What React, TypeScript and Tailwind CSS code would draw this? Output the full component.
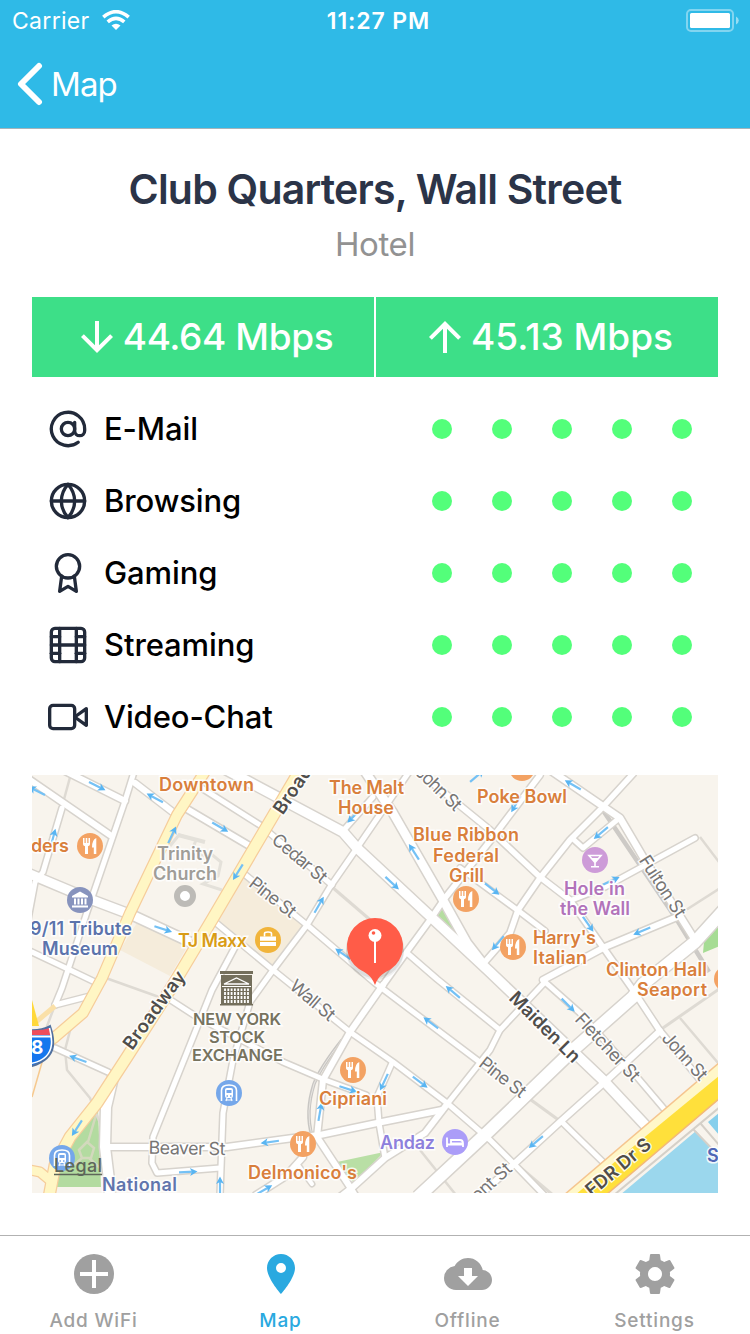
import { ReactNode } from 'react';
import { FiAtSign, FiGlobe, FiAward, FiFilm, FiVideo } from 'react-icons/fi';
import { MdArrowDownward, MdArrowUpward, MdPlace, MdCloudDownload } from 'react-icons/md';

const ratings = [
  { label: 'E-Mail', icon: FiAtSign, score: 5 },
  { label: 'Browsing', icon: FiGlobe, score: 5 },
  { label: 'Gaming', icon: FiAward, score: 5 },
  { label: 'Streaming', icon: FiFilm, score: 5 },
  { label: 'Video-Chat', icon: FiVideo, score: 5 },
];

// Map geometry, [path, width]
const thinRoads: [string, number][] = [
  ['M72 770L63 803', 2.5],
  ['M103 977L173 1002', 2.5],
  ['M332 887L375 924', 3],
  ['M700 837L722 866', 2.5],
  ['M675 917L722 887', 2.5],
  ['M660 1030L722 987', 3],
  ['M680 1018L718 1063', 2.5],
  ['M515 1163L553 1195', 3],
  ['M420 1150L456 1195', 2.5],
  ['M527 1097L560 1121', 3],
  ['M600 806L677 920L709 972', 4.5],
  ['M72 1023L65 1050L67 1070L90 1098L100 1123', 2.5],
  ['M342 1040Q320 1068 314 1084Q305 1112 312 1136', 3.5],
  ['M65 980L55 1005L38 1050', 2.5],
];

const roads: [string, number][] = [
  ['M20 773L62 802L110 835', 6],
  ['M63 770L125 801', 6],
  ['M134 772L125 801L87 912L62 988L55 1005', 5],
  ['M135 783L174 813', 6],
  ['M187 809L248 845', 6],
  ['M200 787L260 825L332 885', 5],
  ['M62 808L43 872L35 882L26 930', 5],
  ['M32 952L70 970L97 983', 5],
  ['M243 873L307 925L375 983L477 1060L492 1071', 5],
  ['M215 922L273 970L350 1032L393 1062L447 1103L490 1140L513 1163L546 1197', 5],
  ['M166 997L197 1017L247 1043L283 1062L325 1080L366 1095', 5],
  ['M235 947L212 990L153 1137L152 1163L157 1173L220 1168', 5],
  ['M409 772L357 848L330 887L307 925L273 970L250 1002L233 1060L223 1113L220 1195', 5],
  ['M55 1048L108 1072', 5],
  ['M55 1005L90 996', 5],
  ['M110 1147L227 1147L293 1138L320 1135L377 1123L442 1110', 6],
  ['M448 1103L425 1133L385 1158L353 1187L340 1197', 6],
  ['M448 1103L490 1050L500 1030L545 982', 5],
  ['M383 985L350 1032L323 1080L317 1137L350 1187L356 1197', 6],
  ['M383 985L403 957L430 920L445 898L490 841L540 775', 5.5],
  ['M373 797L343 831', 5],
  ['M420 773L490 830L540 877L570 900L605 950L633 990L660 1031L702 1082', 5.5],
  ['M460 868L520 912L545 931', 5],
  ['M407 953L437 979L500 1030', 5],
  ['M633 774L600 810L570 840L540 878L518 910L510 933L484 963', 5.5],
  ['M550 770L620 818L643 857L695 940', 6.5],
  ['M617 820L583 848L572 838', 5],
  ['M572 900L605 887L695 838', 5],
  ['M677 917L605 947L543 980', 6],
  ['M660 1031L607 1080L560 1122L513 1165L478 1197', 6],
  ['M545 982L580 1013L637 1077L665 1110', 5],
  ['M563 1123L606 1165', 5],
  ['M392 1063L377 1097L379 1123L385 1158', 5],
  ['M303 1157L286 1176L256 1195', 6],
  ['M298 1165L312 1184', 4],
];

const avenues: [string, number][] = [
  ['M25 872L87 898L132 915L190 942', 9],
  ['M223 768L343 832L357 848L490 972L603 1080L646 1126', 9.5],
  ['M364 770L393 813L443 900L467 943L484 965', 8.5],
  ['M724 910L695 942L643 984L633 997L573 1050L490 1130L418 1197', 12],
  ['M113 1077L106 1107L105 1147L109 1180L110 1197', 10],
];

const highways: [string, number][] = [
  ['M206 770L177 815L130 913L102 978L83 1013L55 1037L28 1056', 10],
  ['M303 765L260 838L213 918L173 985L127 1057L97 1103L70 1137L55 1165L49 1197', 11],
  ['M20 1168L40 1172L52 1182', 9],
];

const flows: [number, number, number][] = [
  [97, 786, 27], [155, 798, 208], [37, 791, 207], [53, 838, -75], [172, 835, -65], [220, 827, 30],
  [238, 872, 122], [163, 929, 18], [354, 816, 135], [414, 852, 237], [392, 883, 43], [319, 905, -60],
  [343, 954, 215], [492, 889, 38], [573, 785, 210], [601, 833, 140], [611, 881, -25], [588, 924, 55],
  [642, 931, 157], [498, 943, 130], [516, 804, 120], [78, 1059, 200], [77, 1128, 123], [188, 1172, -3],
  [220, 1186, -90], [453, 992, 220], [431, 1023, 217], [420, 1082, 37], [384, 1082, 115], [348, 1089, 18],
  [320, 1112, -80], [270, 1142, 172], [264, 1190, -30], [568, 1005, 45], [536, 1142, 140], [477, 776, -40],
];

type PlaceLabel = { t: string; x: number; y: number; w: number; c: string; size?: number };

const ORANGE = '#d97f3c';

const places: PlaceLabel[] = [
  { t: 'Downtown', x: 159, y: 791, w: 95, c: ORANGE },
  { t: 'ders', x: 31, y: 852, w: 38, c: ORANGE },
  { t: 'Trinity', x: 157, y: 860, w: 56, c: '#a09d98' },
  { t: 'Church', x: 153, y: 880, w: 64, c: '#a09d98' },
  { t: '9/11 Tribute', x: 30, y: 935, w: 102, c: '#5b73ac' },
  { t: 'Museum', x: 42, y: 955, w: 76, c: '#5b73ac' },
  { t: 'TJ Maxx', x: 178, y: 947, w: 69, c: '#d99c16' },
  { t: 'The Malt', x: 329, y: 794, w: 75, c: ORANGE },
  { t: 'House', x: 338, y: 814, w: 56, c: ORANGE },
  { t: 'Blue Ribbon', x: 413, y: 841, w: 106, c: ORANGE },
  { t: 'Federal', x: 433, y: 862, w: 66, c: ORANGE },
  { t: 'Grill', x: 449, y: 882, w: 35, c: ORANGE },
  { t: 'Poke Bowl', x: 477, y: 803, w: 90, c: ORANGE },
  { t: 'Hole in', x: 564, y: 895, w: 61, c: '#b273ba' },
  { t: 'the Wall', x: 560, y: 915, w: 70, c: '#b273ba' },
  { t: "Harry's", x: 533, y: 944, w: 63, c: ORANGE },
  { t: 'Italian', x: 533, y: 964, w: 54, c: ORANGE },
  { t: 'Clinton Hall', x: 606, y: 976, w: 101, c: ORANGE },
  { t: 'Seaport', x: 637, y: 996, w: 70, c: ORANGE },
  { t: 'NEW YORK', x: 193, y: 1025, w: 88, c: '#77735f', size: 16.5 },
  { t: 'STOCK', x: 209, y: 1043, w: 56, c: '#77735f', size: 16.5 },
  { t: 'EXCHANGE', x: 192, y: 1061, w: 91, c: '#77735f', size: 16.5 },
  { t: 'Cipriani', x: 319, y: 1105, w: 68, c: ORANGE },
  { t: 'Andaz', x: 380, y: 1149, w: 55, c: '#8d80dc' },
  { t: "Delmonico's", x: 248, y: 1179, w: 109, c: ORANGE },
  { t: 'National', x: 102, y: 1191, w: 75, c: '#6175ad' },
  { t: 'S', x: 707, y: 1162, w: 12, c: '#4f66b5' },
];

// [name, centre x, centre y, angle, length, bold]
const streets: [string, number, number, number, number, boolean?][] = [
  ['Cedar St', 300, 858, 40, 66],
  ['Pine St', 273, 897, 38, 54],
  ['Wall St', 313, 1000, 40, 53],
  ['Pine St', 503, 1077, 38, 54],
  ['Beaver St', 187, 1148, 1, 77],
  ['Fletcher St', 608, 1047, 47, 86],
  ['John St', 685, 1056, 48, 58],
  ['John St', 439, 788, 44, 56],
  ['Fulton St', 663, 886, 57, 70],
  ['Front St', 485, 1187, -42, 64],
  ['Broadway', 154, 1010, -54, 92, true],
  ['Broadway', 303, 774, -56, 92, true],
  ['Maiden Ln', 545, 1027, 45, 92, true],
  ['FDR Dr S', 618, 1167, -40, 79, true],
];

function Poi({ x, y, fill, children }: { x: number; y: number; fill: string; children?: ReactNode }) {
  return (
    <g transform={`translate(${x} ${y})`}>
      <circle r="13" fill={fill} />
      {children}
    </g>
  );
}

function Fork() {
  return (
    <g fill="#fff">
      <path d="M-7 -8h1.500v5h1.200v-5h1.600v5h1.200v-5H0v6.200Q0 -.5 -2 .3V8h-3V.3Q-7 -.5 -7 -1.800Z" />
      <path d="M6.300 -8V8H3.800V1.500H2Q1.800 -6 6.300 -8Z" />
    </g>
  );
}

function Train() {
  return (
    <g fill="none" stroke="#fff" strokeWidth="1.6">
      <path d="M-7.500 8V-2.500Q-7.500 -8 0 -8T7.500 -2.500V8" />
      <rect x="-4" y="-5" width="8" height="10" rx="2" fill="#fff" stroke="none" />
      <path d="M-3 8L-2 5M3 8L2 5M-3.500 7H3.500" strokeWidth="1.200" />
      <path d="M-2.500 -1.500H2.500" stroke="#75a7ea" strokeWidth="3" />
      <path d="M-2.500 3H-1M1 3H2.500" stroke="#75a7ea" />
    </g>
  );
}

function CityMap() {
  return (
    <svg viewBox="32 775 686 418" className="block h-[418px] w-[686px]" fontFamily="Inter, 'Liberation Sans', sans-serif">
      <rect x="32" y="775" width="686" height="418" fill="#f8f4ed" />

      {/* Blocks, parks and water */}
      <path d="M243 873L305 922L272 967L215 918Z" fill="#f5ecdb" />
      <path d="M140 918L190 942L170 976L120 950Z" fill="#f5ecdb" />
      <path d="M442 908L464 944L434 917Z" fill="#b5dda0" />
      <path d="M720 920L704 942L703 953L720 946Z" fill="#a6dc94" />
      <path d="M98 1110L101 1187H55L66 1150Z" fill="#b3dba0" />
      <path d="M88 1142L96 1115M82 1158L74 1165M89 1158L100 1168M79 1150L87 1142L94 1148L91 1158H82Z" fill="none" stroke="#d3d9bd" strokeWidth="2.500" />
      <path d="M337 1162L384 1152L354 1183Z" fill="#b9dfa5" />
      <path d="M620 1195L696 1131L718 1157V1195Z" fill="#9bd7ed" />
      <path d="M708 1122L720 1112V1136Z" fill="#86cfec" />
      <path d="M170 846L179 835L196 840L193 848L202 856L210 853L221 862L218 876L203 884L222 890" fill="none" stroke="#e4e1da" strokeWidth="3" />
      <path d="M178 835L205 842" stroke="#e4e1da" strokeWidth="4" />

      {/* Roads: casings first, fills on top */}
      <g fill="none" strokeLinejoin="round">
        {thinRoads.map(([d, w]) => <path key={d} d={d} stroke={w > 4 ? '#cdcac6' : w === 3.5 ? '#c8c6c3' : '#dedad3'} strokeWidth={w} />)}
        <path d="M342 1040Q320 1068 314 1084Q305 1112 312 1136" stroke="#e9e6e2" strokeWidth="1" />
        {roads.map(([d, w]) => <path key={d} d={d} stroke="#d7d3cd" strokeWidth={w + 3} strokeLinecap="round" />)}
        {avenues.map(([d, w]) => <path key={d} d={d} stroke="#d7d3cd" strokeWidth={w + 3} />)}
        {roads.map(([d, w]) => <path key={d} d={d} stroke="#fff" strokeWidth={w} strokeLinecap="round" />)}
        {avenues.map(([d, w]) => <path key={d} d={d} stroke="#fff" strokeWidth={w} />)}
        {highways.map(([d, w]) => <path key={d} d={d} stroke="#f6cd9b" strokeWidth={w + 2} />)}
        {highways.map(([d, w]) => <path key={d} d={d} stroke="#fff6c4" strokeWidth={w - 0.5} />)}
        <path d="M32 1097L45 1052" stroke="#f6c98f" strokeWidth="1.5" />
        <path d="M36 1022L55 1006" stroke="#fae0a8" strokeWidth="5" />
        <path d="M32 1000L39 1026H32Z" fill="#ffd83b" />
      </g>

      {/* FDR Drive */}
      <path d="M564 1195L720 1062V1098L606 1195Z" fill="#fff7c9" />
      <path d="M564 1195L720 1062" stroke="#f5c58f" strokeWidth="1.5" />
      <path d="M575 1195L646 1136L720 1075V1098L606 1195Z" fill="#ffe03b" />
      <path d="M606 1195L720 1098" stroke="#f3b878" strokeWidth="1.5" />
      <path d="M614 1195L720 1107M693 1129L718 1155M701 1124L720 1146" stroke="#d5d0c8" strokeWidth="2" />

      {flows.map(([x, y, a]) => (
        <g key={`${x}-${y}`} transform={`translate(${x} ${y}) rotate(${a})`}>
          <path d="M-9 0H6" stroke="#74c1f5" strokeWidth="2.200" />
          <path d="M9.500 0L2 -4L4 0L2 4Z" fill="#59b5f2" />
        </g>
      ))}

      {/* Interstate shield */}
      <path d="M28 1030Q41 1031 50 1026Q54 1037 53 1046Q51 1060 32 1066L28 1066Z" fill="#1677ee" stroke="#51709e" strokeWidth="2" />
      <path d="M28 1030Q41 1031 49 1028L51 1035H28Z" fill="#ef4d5c" />
      <path d="M28 1036.500H51" stroke="#fff" strokeWidth="2" />
      <path d="M28 1064Q50 1061 51.500 1044Q52 1037 49.500 1028" fill="none" stroke="#fff" strokeWidth="1.600" />
      <text x="31" y="1054" fontSize="19" fontWeight="700" fill="#fff">8</text>

      {streets.map(([name, x, y, a, len, bold]) => (
        <text
          key={`${name}-${x}`}
          transform={`translate(${x} ${y}) rotate(${a})`}
          textAnchor="middle"
          y="6.500"
          textLength={len}
          fontSize={bold ? 18.5 : 18}
          fontWeight={bold ? 600 : 400}
          fill={bold ? '#4f4d4b' : '#777574'}
          stroke="#fff"
          strokeOpacity="0.85"
          strokeWidth="3"
          paintOrder="stroke"
        >
          {name}
        </text>
      ))}

      {/* Stock exchange */}
      <g transform="translate(220 971)">
        <path d="M0 0H33V3H0ZM1 4H32V34H1Z" fill="#746f5c" />
        <path d="M4 13L16.500 7L29 13Z" fill="none" stroke="#fff" strokeWidth="1.300" />
        <path d="M2 15.500H31" stroke="#fff" strokeWidth="1" />
        <path d="M5 17.500V32M8.300 17.500V32M11.600 17.500V32M14.900 17.500V32M18.200 17.500V32M21.500 17.500V32M24.800 17.500V32M28 17.500V32" stroke="#fff" strokeWidth="1.800" />
        <path d="M4 20.500H29M4 24.500H29M4 28.500H29" stroke="#746f5c" strokeWidth="1" />
        <path d="M0 33H33V34.500H0Z" fill="#746f5c" />
      </g>

      <Poi x={90} y={846} fill="#f3a263"><Fork /></Poi>
      <Poi x={466} y={899} fill="#f3a263"><Fork /></Poi>
      <Poi x={513} y={947} fill="#f3a263"><Fork /></Poi>
      <Poi x={353} y={1070} fill="#f3a263"><Fork /></Poi>
      <Poi x={303} y={1144} fill="#f3a263"><Fork /></Poi>
      <Poi x={522} y={768} fill="#f3a263" />
      <Poi x={727} y={979} fill="#f3a263" />
      <Poi x={229} y={1093} fill="#75a7ea"><Train /></Poi>
      <Poi x={62} y={1158} fill="#75a7ea"><Train /></Poi>
      <circle cx="185" cy="896" r="8" fill="#fff" stroke="#bdbbb7" strokeWidth="6" />
      <Poi x={80} y={900} fill="#8793bd">
        <path d="M-8 -4L0 -8.500L8 -4V-2.500H-8ZM-6 -1.500h2v6h-2ZM-2.500 -1.500h2v6h-2ZM1 -1.500h2v6h-2ZM4.500 -1.500h2v6h-2ZM-8 5.500H8V7.500H-8Z" fill="#fff" />
      </Poi>
      <Poi x={268} y={940} fill="#f1b43a">
        <path d="M-8 -3.500H8V.8H-8ZM-8 2H8V6H-8Z" fill="#fff" />
        <path d="M-3.500 -3.500V-6.500Q-3.500 -8 0 -8T3.500 -6.500V-3.500" fill="none" stroke="#fff" strokeWidth="1.600" />
      </Poi>
      <Poi x={595} y={860} fill="#cd9bd8">
        <path d="M-6 -4.500H6L0 2.500ZM0 1V6.500M-4 6.700H4" fill="none" stroke="#fff" strokeWidth="1.600" />
        <path d="M-4 -2H4L0 2Z" fill="#fff" />
      </Poi>
      <Poi x={455} y={1142} fill="#ab9df8">
        <path d="M-8 -4.500V5M-8 2.500H8V5M-4 -2H5Q8 -2 8 1.500H-4Z" fill="none" stroke="#fff" strokeWidth="1.800" />
      </Poi>

      {places.map(({ t, x, y, w, c, size }) => (
        <text
          key={`${t}-${y}`}
          x={x}
          y={y}
          textLength={w}
          fontSize={size || 18}
          fontWeight="600"
          fill={c}
          stroke="#fff"
          strokeOpacity="0.85"
          strokeWidth="3"
          paintOrder="stroke"
        >
          {t}
        </text>
      ))}
      <text x="54" y="1172" textLength="48" fontSize="18" fontWeight="500" fill="#5e665a">Legal</text>
      <path d="M54 1174.500H102" stroke="#5e665a" strokeWidth="1.500" />

      {/* Selected hotspot */}
      <circle cx="375" cy="951" r="29" fill="#000" opacity="0.06" />
      <circle cx="375" cy="949" r="29" fill="#000" opacity="0.08" />
      <path d="M375 985C371 975 366 973 359 969A28 28 0 1 1 391 969C384 973 379 975 375 985Z" fill="#ff5c48" />
      <path d="M375 940V963" stroke="#fff" strokeWidth="2" />
      <circle cx="375" cy="935.500" r="6.500" fill="#fff" />
      <circle cx="373.500" cy="933" r="1.800" fill="#ff5c48" />
    </svg>
  );
}

function StatusBar() {
  return (
    <div className="flex h-[42px] items-center">
      <div className="flex flex-1 items-center gap-[12px] pl-3">
        <span className="text-[23px] font-normal tracking-[0.3px]">Carrier</span>
        <svg viewBox="0 0 28 20" className="mb-[2px] h-5 w-7">
          <path d="M1.300 7.200Q14 -3.800 26.700 7.200M5.700 11.800Q14 4.800 22.300 11.800" fill="none" stroke="#fff" strokeWidth="3.600" />
          <path d="M14 20L9.500 15.600Q14 11.800 18.500 15.600Z" fill="#fff" />
        </svg>
      </div>
      <span className="ml-[6px] text-[23px] font-semibold tracking-[0.9px]">11:27 PM</span>
      <div className="flex flex-1 items-center justify-end pr-[11px]">
        <svg viewBox="0 0 53 24" className="mb-[1px] h-6 w-[53px]">
          <rect x="1" y="1" width="46" height="21" rx="4" fill="none" stroke="#fff" strokeOpacity="0.4" strokeWidth="2" />
          <rect x="4" y="4" width="40" height="15" rx="1.500" fill="#fff" />
          <path d="M50 7.500Q52.800 9 52.800 11.500T50 15.500Z" fill="#fff" fillOpacity="0.5" />
        </svg>
      </div>
    </div>
  );
}

const tabs = [
  {
    label: 'Add WiFi',
    icon: (
      <svg viewBox="0 0 48 48" className="size-12">
        <circle cx="24" cy="24" r="20" fill="currentColor" />
        <path d="M24 10V38M10 24H38" stroke="#fff" strokeWidth="4" />
      </svg>
    ),
  },
  { label: 'Map', icon: <MdPlace size={48} />, active: true },
  { label: 'Offline', icon: <MdCloudDownload size={48} /> },
  {
    label: 'Settings',
    icon: (
      <svg viewBox="0 0 24 24" className="size-12" fill="currentColor">
        <path d="M19.430 12.980c.04-.32.07-.64.07-.98s-.03-.66-.07-.98l2.110-1.650c.19-.15.24-.42.12-.64l-2-3.460c-.12-.22-.39-.3-.61-.22l-2.490 1c-.52-.4-1.080-.73-1.690-.98l-.38-2.650C14.460 2.180 14.250 2 14 2h-4c-.25 0-.46.18-.49.42l-.38 2.650c-.61.25-1.170.59-1.690.98l-2.490-1c-.23-.09-.49 0-.61.22l-2 3.460c-.13.22-.07.49.12.64l2.110 1.650c-.04.32-.07.65-.07.98s.03.66.07.98l-2.110 1.650c-.19.15-.24.42-.12.64l2 3.460c.12.22.39.3.61.22l2.490-1c.52.4 1.080.73 1.690.98l.38 2.650c.03.24.24.42.49.42h4c.25 0 .46-.18.49-.42l.38-2.650c.61-.25 1.170-.59 1.690-.98l2.490 1c.23.09.49 0 .61-.22l2-3.460c.12-.22.07-.49-.12-.64l-2.110-1.650zM12 15.500c-1.930 0-3.500-1.570-3.500-3.500s1.570-3.500 3.500-3.500 3.500 1.570 3.500 3.500-1.570 3.500-3.500 3.500z" />
      </svg>
    ),
  },
];

export default function App() {
  return (
    <div className="flex h-[1334px] w-[750px] flex-col overflow-hidden bg-white font-['Inter','Liberation_Sans',sans-serif]">
      <header className="h-[129px] shrink-0 border-b border-[#a5b4ba] bg-[#2fbae7] text-white">
        <StatusBar />
        <div className="flex h-[84px] items-center pl-[17px]">
          <svg viewBox="0 0 26 44" className="h-11 w-[26px]">
            <path d="M22 4L4 22L22 40" fill="none" stroke="#fff" strokeWidth="6" strokeLinecap="round" strokeLinejoin="round" />
          </svg>
          <span className="mt-[2px] ml-[8px] text-[33px] font-normal tracking-[-0.9px]">Map</span>
        </div>
      </header>

      <main className="flex flex-1 flex-col px-8 pt-[34px]">
        <h1 className="text-center text-[41px] leading-[52px] font-semibold tracking-[-0.78px] text-[#2b3448]">Club Quarters, Wall Street</h1>
        <p className="mt-[7px] text-center text-[33px] leading-[44px] font-normal tracking-[-0.4px] text-[#929292]">Hotel</p>

        {/* Speeds */}
        <div className="mt-[31px] flex h-20 gap-[2px] text-[37px] font-medium text-white">
          <div className="flex flex-1 items-center justify-center bg-[#3ddf88]">
            <MdArrowDownward size={48} />
            <span className="ml-[2px] tracking-[-0.4px]">44.64 Mbps</span>
          </div>
          <div className="flex flex-1 items-center justify-center bg-[#3ddf88]">
            <MdArrowUpward size={48} />
            <span className="ml-[2px]">45.13 Mbps</span>
          </div>
        </div>

        {/* Ratings */}
        <ul className="mt-4">
          {ratings.map(({ label, icon: Icon, score }) => (
            <li key={label} className="flex h-[72px] items-center pr-[26px] pl-4">
              <Icon size={40} color="#222a3a" />
              <span className="ml-4 flex-1 text-[31px] font-medium tracking-[-0.1px] text-black">{label}</span>
              <div className="flex gap-10">
                {Array.from({ length: score }, (_, i) => (
                  <span key={i} className="size-5 rounded-full bg-[#53ff7a]" />
                ))}
              </div>
            </li>
          ))}
        </ul>

        <div className="mt-[22px]">
          <CityMap />
        </div>
      </main>

      <nav className="grid h-[99px] shrink-0 grid-cols-4 border-t border-[#b2b2b2] pr-[2px]">
        {tabs.map(({ label, icon, active }) => (
          <div key={label} className={`flex flex-col items-center pt-[14px] ${active ? 'text-[#2aa9e0]' : 'text-[#a0a0a0]'}`}>
            {icon}
            <span className="mt-[9px] text-[19px] leading-7 font-medium tracking-[0.8px]">{label}</span>
          </div>
        ))}
      </nav>
    </div>
  );
}
